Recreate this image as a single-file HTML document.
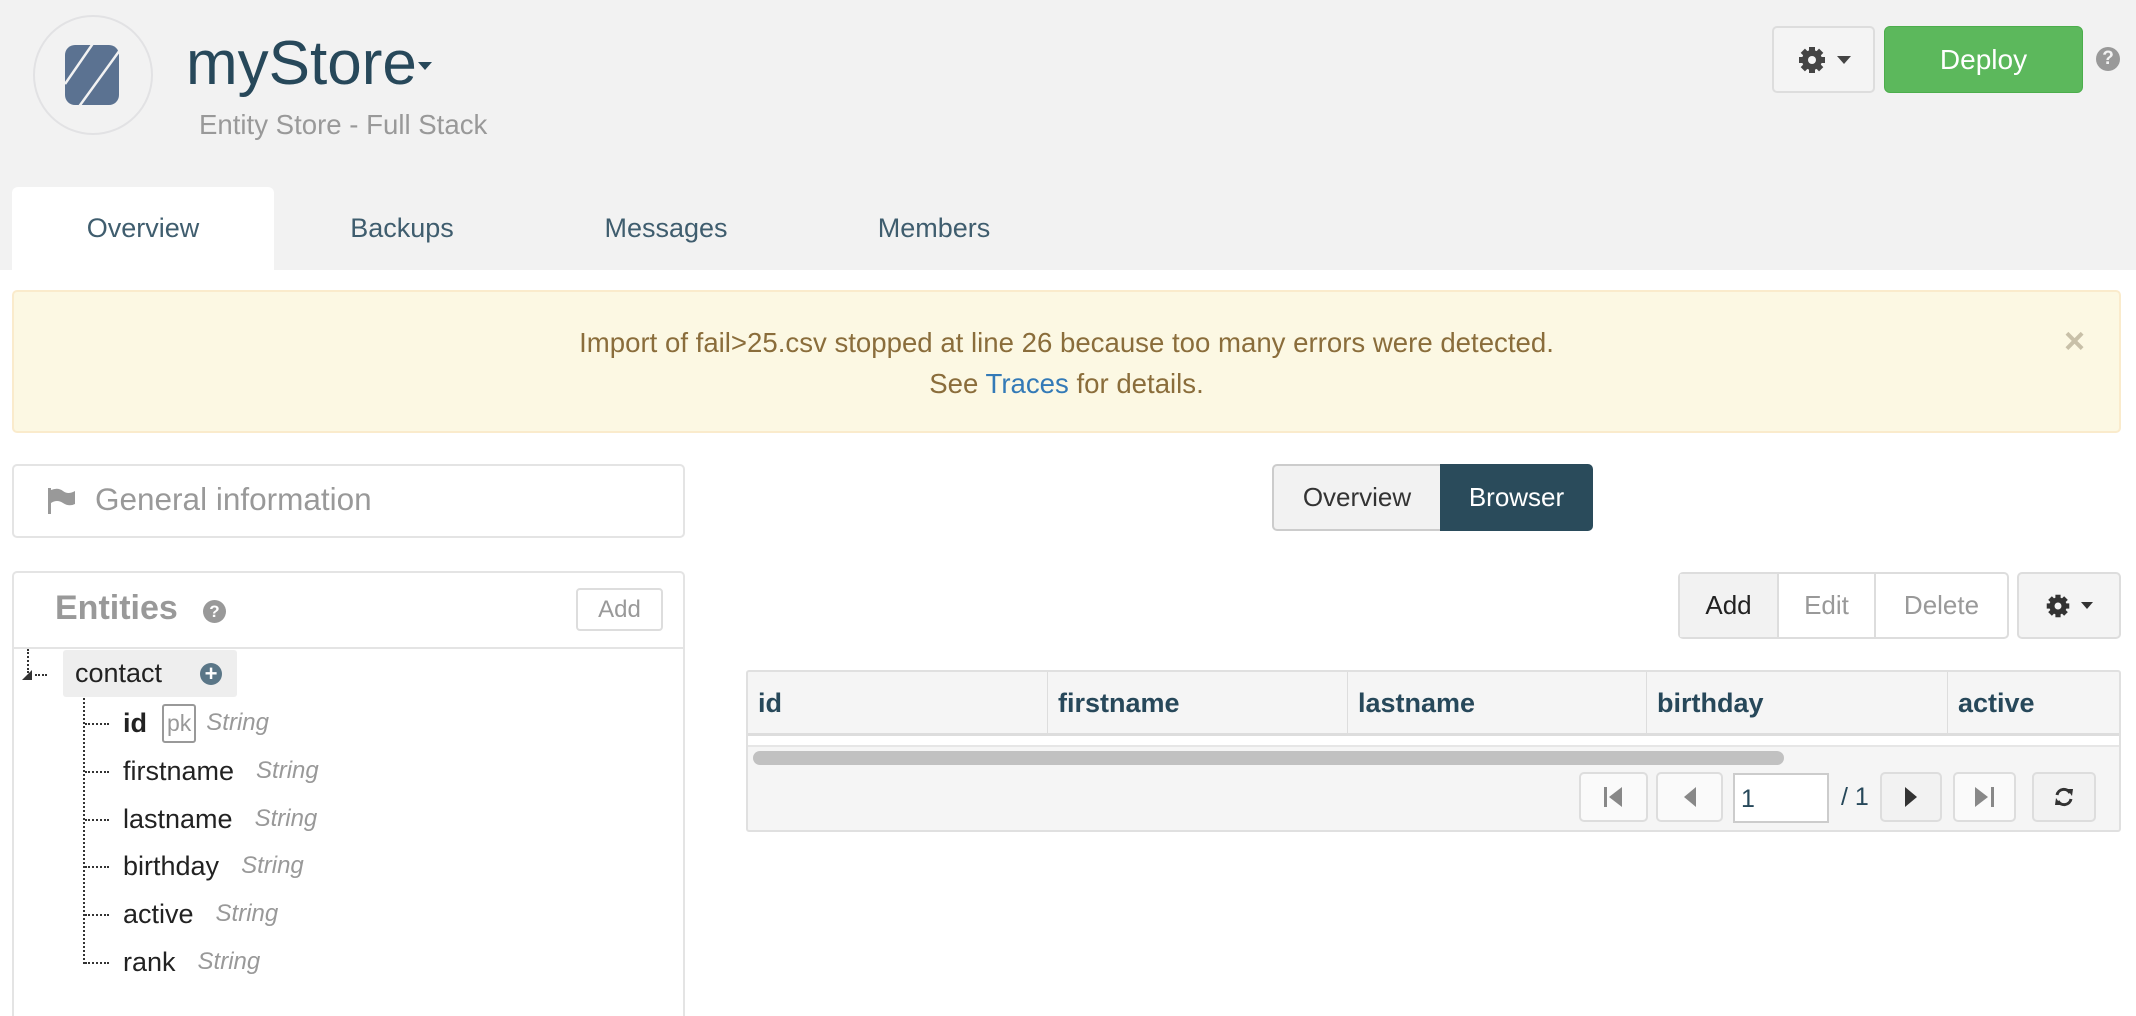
<!DOCTYPE html>
<html><head><meta charset="utf-8"><style>
*{box-sizing:border-box;margin:0;padding:0}
html,body{width:2136px;height:1016px;overflow:hidden}
body{background:#fff;font-family:"Liberation Sans",Arial,sans-serif;position:relative}
.abs{position:absolute}
.hdr{left:0;top:0;width:2136px;height:270px;background:#f2f2f2}
.btn{position:absolute;border:2px solid #ddd;border-radius:5px;background:#f4f4f4;display:flex;align-items:center;justify-content:center}
.tab{position:absolute;top:187px;height:83px;display:flex;align-items:center;justify-content:center;font-size:27px;color:#3f5d6e}
.row{position:absolute;left:123px;font-size:27px;color:#222;height:40px;display:flex;align-items:center}
.row i{color:#999;font-size:24px;margin-left:22px}
.hd{position:absolute;top:0;height:63px;display:flex;align-items:center;font-weight:bold;font-size:27px;color:#27485a;border-right:1px solid #ddd;padding-left:10px}
.pb{position:absolute;top:772px;height:50px;border:2px solid #ddd;border-radius:5px;background:#fafafa;display:flex;align-items:center;justify-content:center}
</style></head><body>
<div class="abs hdr"></div>
<div class="abs" style="left:33px;top:15px;width:120px;height:120px;border-radius:50%;border:2px solid #e2e2e4;background:#f2f2f2"></div>
<svg class="abs" style="left:64px;top:44px" width="56" height="62" viewBox="0 0 56 62"><rect x="1" y="1" width="54" height="60" rx="10" fill="#5b7291"/><path d="M1 40 L30 -2 M14 64 L56 6" stroke="#f2f2f2" stroke-width="2.5"/></svg>
<div class="abs" style="left:186px;top:28px;font-size:62px;color:#27485a">myStore</div>
<svg class="abs" style="left:418px;top:62px" width="14" height="8"><path d="M0 0H14L7 8Z" fill="#27485a"/></svg>
<div class="abs" style="left:199px;top:109px;font-size:27.6px;color:#999">Entity Store - Full Stack</div>
<div class="btn" style="left:1772px;top:26px;width:103px;height:67px">
<svg width="30" height="30" viewBox="0 0 30 30"><g fill="#444"><circle cx="15" cy="15" r="10"/><rect x="12" y="2" width="6" height="26"/><rect x="2" y="12" width="26" height="6"/><rect x="12" y="2" width="6" height="26" transform="rotate(45 15 15)"/><rect x="12" y="2" width="6" height="26" transform="rotate(-45 15 15)"/></g><circle cx="15" cy="15" r="4" fill="#f4f4f4"/></svg>
<svg style="margin-left:10px" width="14" height="8"><path d="M0 0H14L7 8Z" fill="#444"/></svg></div>
<div class="abs" style="left:1884px;top:26px;width:199px;height:67px;background:#5cb85c;border:1px solid #4cae4c;border-radius:6px;color:#fff;font-size:28px;display:flex;align-items:center;justify-content:center">Deploy</div>
<div class="abs" style="left:2096px;top:47px;width:24px;height:24px;border-radius:50%;background:#999;color:#f2f2f2;font-weight:bold;font-size:19px;text-align:center;line-height:24px">?</div>
<div class="abs" style="left:12px;top:187px;width:262px;height:85px;background:#fff;border-radius:6px 6px 0 0"></div>
<div class="tab" style="left:12px;width:262px">Overview</div>
<div class="tab" style="left:300px;width:204px">Backups</div>
<div class="tab" style="left:560px;width:212px">Messages</div>
<div class="tab" style="left:830px;width:208px">Members</div>
<div class="abs" style="left:12px;top:290px;width:2109px;height:143px;background:#fcf8e3;border:2px solid #faebcc;border-radius:5px"></div>
<div class="abs" style="left:12px;top:322px;width:2109px;text-align:center;color:#8a6d3b;font-size:27.6px;line-height:41px">Import of fail&gt;25.csv stopped at line 26 because too many errors were detected.<br>See <span style="color:#337ab7">Traces</span> for details.</div>
<div class="abs" style="left:2064px;top:320px;font-size:36px;color:#c8c0a8;font-weight:bold">×</div>
<div class="abs" style="left:12px;top:464px;width:673px;height:74px;border:2px solid #e4e4e4;border-radius:5px"></div>
<svg class="abs" style="left:46px;top:487px" width="30" height="28"><rect x="2" y="1" width="3" height="26" fill="#999"/><path d="M5 3 Q12 0 17 4 T29 4 V17 Q23 20 17 16 T5 16Z" fill="#999"/></svg>
<div class="abs" style="left:95px;top:481px;font-size:31.5px;color:#999">General information</div>
<div class="abs" style="left:12px;top:571px;width:673px;height:480px;border:2px solid #e4e4e4;border-radius:5px"></div>
<div class="abs" style="left:12px;top:647px;width:673px;height:2px;background:#e4e4e4"></div>
<div class="abs" style="left:55px;top:589px;font-size:34px;font-weight:bold;color:#999">Entities</div>
<div class="abs" style="left:203px;top:600px;width:23px;height:23px;border-radius:50%;background:#999;color:#fff;font-weight:bold;font-size:17px;text-align:center;line-height:23px">?</div>
<div class="abs" style="left:576px;top:588px;width:87px;height:43px;border:2px solid #ddd;border-radius:4px;color:#999;font-size:24px;display:flex;align-items:center;justify-content:center">Add</div>
<div class="abs" style="left:27px;top:649px;height:24px;border-left:2px dotted #333"></div>
<svg class="abs" style="left:22px;top:668px" width="12" height="12"><path d="M0 12H10V2Z" fill="#333"/></svg>
<div class="abs" style="left:35px;top:674px;width:12px;border-top:2px dotted #333"></div>
<div class="abs" style="left:63px;top:650px;width:174px;height:47px;background:#eee;border-radius:3px"></div>
<div class="abs" style="left:75px;top:658px;font-size:27px;color:#222">contact</div>
<div class="abs" style="left:200px;top:663px;width:22px;height:22px;border-radius:50%;background:#5a7687;color:#fff;font-weight:bold;font-size:22px;text-align:center;line-height:22px">+</div>
<div class="abs" style="left:83px;top:698px;height:266px;border-left:2px dotted #333"></div>
<div class="abs" style="left:85px;top:723px;width:24px;border-top:2px dotted #333"></div>
<div class="abs" style="left:85px;top:771px;width:24px;border-top:2px dotted #333"></div>
<div class="abs" style="left:85px;top:819px;width:24px;border-top:2px dotted #333"></div>
<div class="abs" style="left:85px;top:866px;width:24px;border-top:2px dotted #333"></div>
<div class="abs" style="left:85px;top:914px;width:24px;border-top:2px dotted #333"></div>
<div class="abs" style="left:85px;top:962px;width:24px;border-top:2px dotted #333"></div>
<div class="row" style="top:703px"><b>id</b><span style="margin-left:15px;border:2px solid #999;border-radius:3px;color:#999;font-size:23px;padding:4px 3px">pk</span><i style="margin-left:10px">String</i></div>
<div class="row" style="top:751px">firstname<i>String</i></div>
<div class="row" style="top:799px">lastname<i>String</i></div>
<div class="row" style="top:846px">birthday<i>String</i></div>
<div class="row" style="top:894px">active<i>String</i></div>
<div class="row" style="top:942px">rank<i>String</i></div>
<div class="abs" style="left:1272px;top:464px;width:168px;height:67px;background:#f2f2f2;border:2px solid #ccc;border-right:none;border-radius:5px 0 0 5px;font-size:26px;color:#333;display:flex;align-items:center;justify-content:center">Overview</div>
<div class="abs" style="left:1440px;top:464px;width:153px;height:67px;background:#2a4b5b;border-radius:0 5px 5px 0;font-size:26px;color:#fff;display:flex;align-items:center;justify-content:center">Browser</div>
<div class="abs" style="left:1678px;top:572px;width:331px;height:67px;border:2px solid #ddd;border-radius:5px;background:#fff"></div>
<div class="abs" style="left:1680px;top:574px;width:99px;height:63px;background:#f2f2f2;border-right:2px solid #ddd;font-size:26px;color:#222;display:flex;align-items:center;justify-content:center">Add</div>
<div class="abs" style="left:1779px;top:574px;width:97px;height:63px;border-right:2px solid #ddd;font-size:26px;color:#999;display:flex;align-items:center;justify-content:center">Edit</div>
<div class="abs" style="left:1876px;top:574px;width:131px;height:63px;font-size:26px;color:#999;display:flex;align-items:center;justify-content:center">Delete</div>
<div class="btn" style="left:2017px;top:572px;width:104px;height:67px">
<svg width="26" height="26" viewBox="0 0 30 30"><g fill="#333"><circle cx="15" cy="15" r="10"/><rect x="12" y="2" width="6" height="26"/><rect x="2" y="12" width="26" height="6"/><rect x="12" y="2" width="6" height="26" transform="rotate(45 15 15)"/><rect x="12" y="2" width="6" height="26" transform="rotate(-45 15 15)"/></g><circle cx="15" cy="15" r="4" fill="#f4f4f4"/></svg>
<svg style="margin-left:10px" width="12" height="7"><path d="M0 0H12L6 7Z" fill="#333"/></svg></div>
<div class="abs" style="left:746px;top:670px;width:1375px;height:162px;border:2px solid #e0e0e0;border-radius:3px;background:#f5f5f5"></div>
<div class="abs" style="left:748px;top:672px;width:1371px;height:63px">
<div class="hd" style="left:0;width:300px">id</div>
<div class="hd" style="left:300px;width:300px">firstname</div>
<div class="hd" style="left:600px;width:299px">lastname</div>
<div class="hd" style="left:899px;width:301px">birthday</div>
<div class="hd" style="left:1200px;width:171px;border:none">active</div>
</div>
<div class="abs" style="left:748px;top:733px;width:1371px;height:14px;background:#fff;border-top:3px solid #ddd;border-bottom:2px solid #e6e6e6"></div>
<div class="abs" style="left:753px;top:751px;width:1031px;height:14px;background:#c1c1c1;border-radius:7px"></div>
<div class="pb" style="left:1579px;width:69px"><svg width="24" height="22"><rect x="2" y="1" width="3" height="20" fill="#888"/><path d="M20 1V21L7 11Z" fill="#888"/></svg></div>
<div class="pb" style="left:1656px;width:67px"><svg width="16" height="22"><path d="M14 1V21L2 11Z" fill="#888"/></svg></div>
<div class="abs" style="left:1733px;top:773px;width:96px;height:50px;background:#fff;border:2px solid #ccc;font-size:25px;color:#27485a;padding:10px 6px">1</div>
<div class="abs" style="left:1841px;top:783px;font-size:25px;color:#27485a">/ 1</div>
<div class="pb" style="left:1880px;width:62px;background:#f2f2f2"><svg width="16" height="22"><path d="M2 1V21L14 11Z" fill="#333"/></svg></div>
<div class="pb" style="left:1953px;width:63px"><svg width="24" height="22"><path d="M2 1V21L15 11Z" fill="#888"/><rect x="18" y="1" width="3" height="20" fill="#888"/></svg></div>
<div class="pb" style="left:2032px;width:64px;background:#f2f2f2"><svg width="22" height="22" viewBox="0 0 22 22"><path d="M4 9A7 7 0 0 1 17 7M18 13A7 7 0 0 1 5 15" stroke="#333" stroke-width="3" fill="none"/><path d="M14 3L20 3L19 10Z" fill="#333"/><path d="M8 19L2 19L3 12Z" fill="#333"/></svg></div>
</body></html>
